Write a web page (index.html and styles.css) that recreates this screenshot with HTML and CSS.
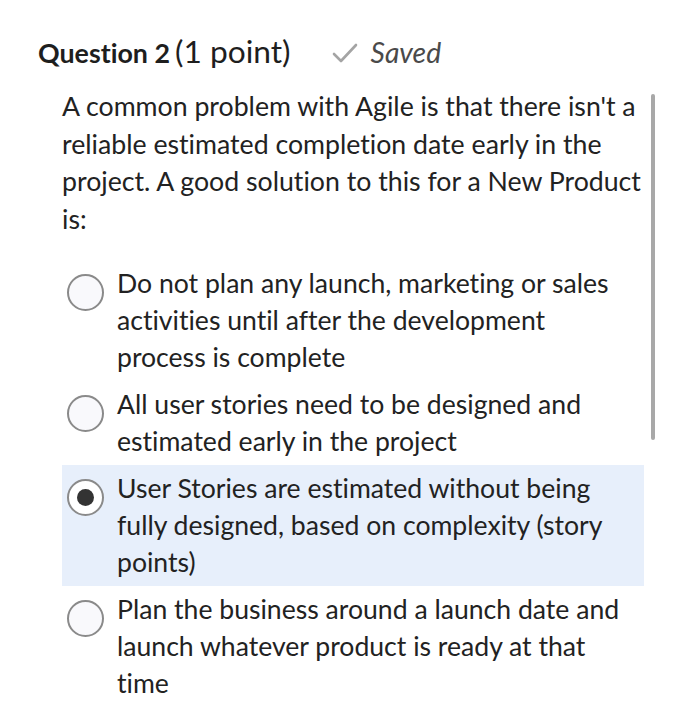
FILE: index.html
```html
<!DOCTYPE html>
<html>
<head>
<meta charset="utf-8">
<link rel="stylesheet" href="styles.css">
</head>
<body>
<div class="page">
  <div class="header">
    <span class="q-title">Question 2</span>
    <span class="q-points">(1 point)</span>
    <span class="saved">
      <svg class="check" width="28" height="22" viewBox="0 0 28 22"><path d="M3 12 L10 19 L25 3" fill="none" stroke="#a4a4a4" stroke-width="2.6" stroke-linecap="round" stroke-linejoin="round"/></svg>
      <span class="saved-text">Saved</span>
    </span>
  </div>
  <div class="body">
    <div class="content">
      <p class="prompt">A common problem with Agile is that there isn't a reliable estimated completion date early in the project. A good solution to this for a New Product is:</p>
      <div class="options">
        <div class="option">
          <span class="radio"></span>
          <span class="label">Do not plan any launch, marketing or sales activities until after the development process is complete</span>
        </div>
        <div class="option">
          <span class="radio"></span>
          <span class="label">All user stories need to be designed and estimated early in the project</span>
        </div>
        <div class="option selected">
          <span class="radio"><span class="dot"></span></span>
          <span class="label">User Stories are estimated without being fully designed, based on complexity (story points)</span>
        </div>
        <div class="option">
          <span class="radio"></span>
          <span class="label">Plan the business around a launch date and launch whatever product is ready at that time</span>
        </div>
      </div>
    </div>
    <div class="scrollbar"></div>
  </div>
</div>
</body>
</html>
```
FILE: styles.css
```css
html, body {
  margin: 0;
  padding: 0;
  background: #ffffff;
}
body {
  font-family: Lato, "Open Sans", sans-serif;
  font-variant-ligatures: none;
  color: #222;
}
.page {
  padding: 32px 0 0 38px;
}
.header {
  display: flex;
  align-items: baseline;
  height: 42px;
}
.q-title {
  font-weight: 700;
  font-size: 26.8px;
  color: #1e1e1e;
}
.q-points {
  font-size: 31.7px;
  margin-left: 5px;
  color: #1e1e1e;
}
.saved {
  margin-left: 40px;
  display: inline-flex;
  align-items: baseline;
}
.check {
  align-self: center;
  margin-right: 12px;
  position: relative;
  top: 1px;
}
.saved-text {
  font-style: italic;
  font-size: 28.3px;
  color: #4a4a4a;
}
.body {
  display: flex;
  margin-left: 24px;
  margin-top: 14px;
}
.content {
  width: 582px;
}
.prompt {
  margin: 0;
  font-size: 26.7px;
  line-height: 37.7px;
  color: #222;
}
.options {
  margin-top: 21px;
  display: flex;
  flex-direction: column;
}
.option {
  display: flex;
  align-items: flex-start;
  padding: 5px 20px 5px 5px;
}
.option.selected {
  background: #e7effb;
}
.radio {
  flex: none;
  width: 33px;
  height: 33px;
  border: 2px solid #8a8a8a;
  border-radius: 50%;
  background: #f9f9fc;
  margin-top: 9px;
  margin-right: 13px;
  display: flex;
  align-items: center;
  justify-content: center;
}
.selected .radio {
  background: #ffffff;
}
.dot {
  width: 17px;
  height: 17px;
  border-radius: 50%;
  background: #333333;
}
.label {
  font-size: 26.6px;
  line-height: 37px;
  color: #222;
}
.scrollbar {
  flex: none;
  width: 4px;
  height: 346px;
  margin-left: 7px;
  margin-top: 6px;
  border-radius: 2px;
  background: #a8a8a8;
}
```
